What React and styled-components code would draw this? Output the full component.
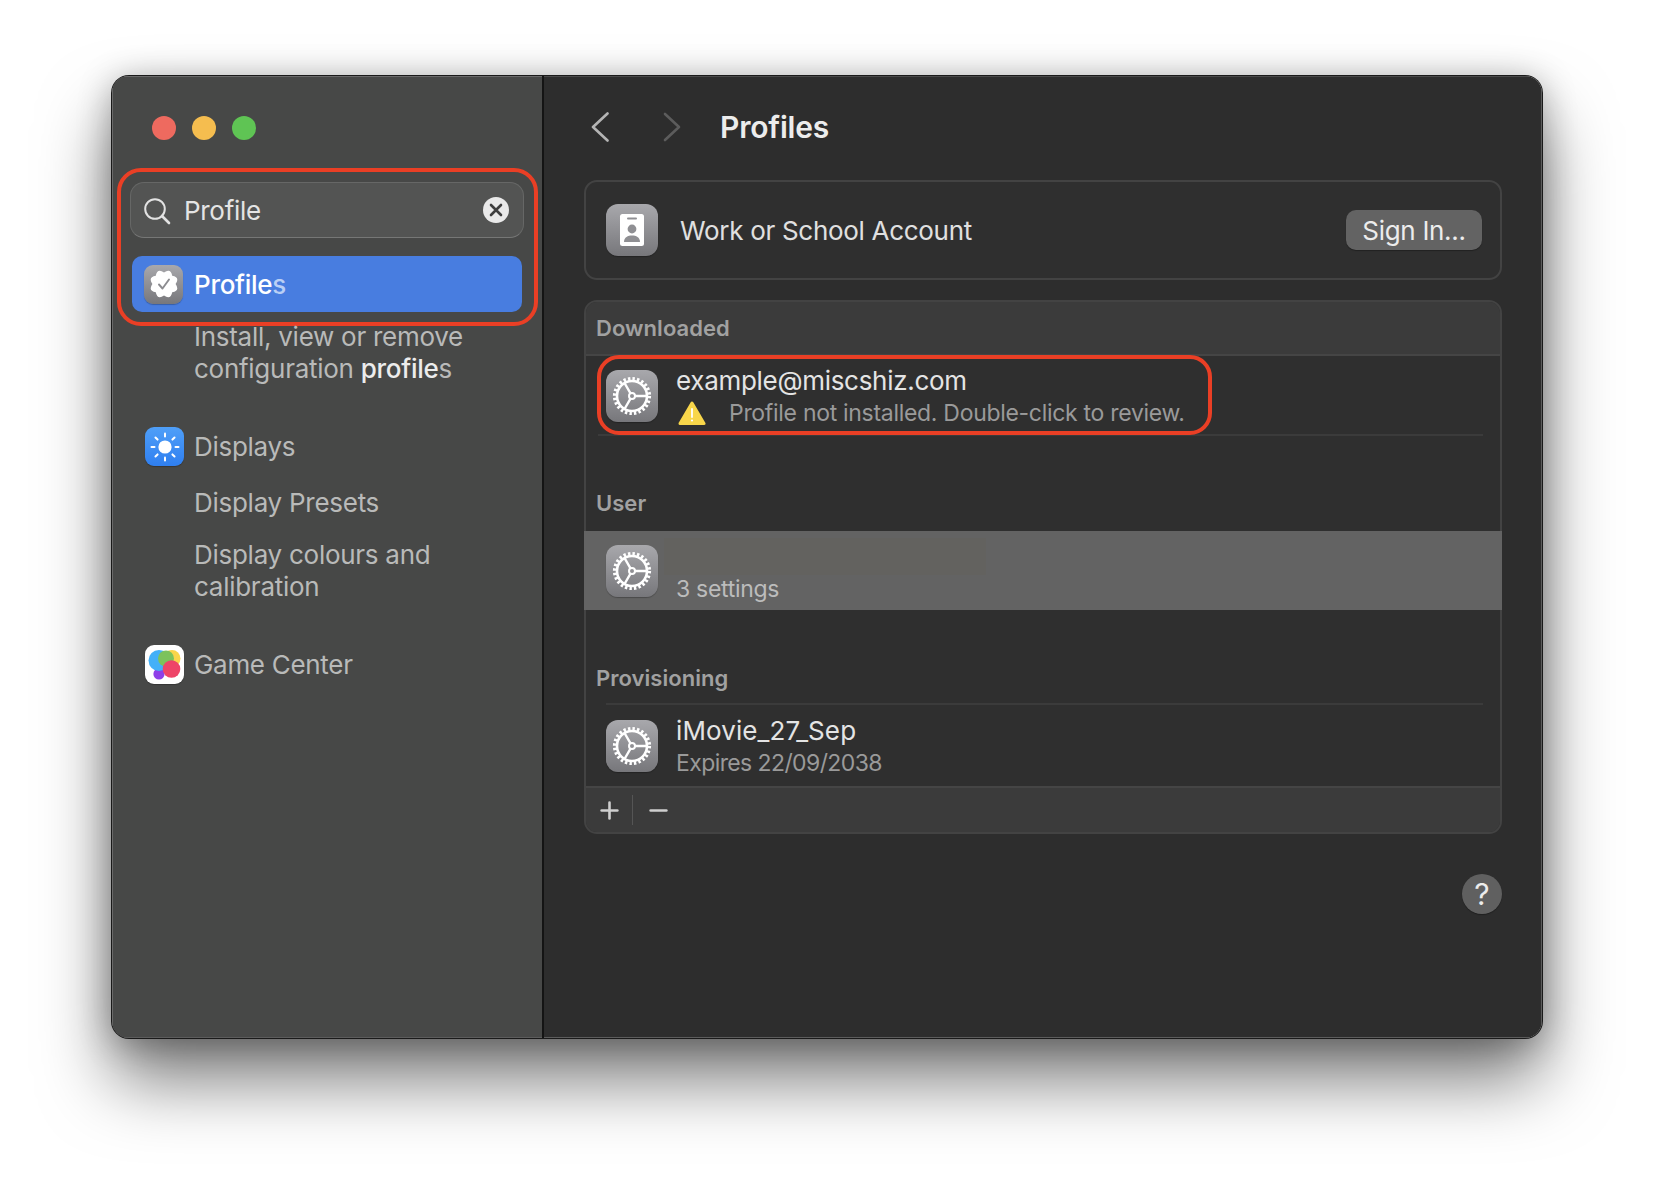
import styled, { createGlobalStyle } from "styled-components";
import { Plus, Minus } from "lucide-react";

const GlobalStyle = createGlobalStyle`
  html, body {
    margin: 0;
    background: #ffffff;
    font-family: Inter, "Liberation Sans", sans-serif;
  }
`;

const Page = styled.div`
  width: 1654px;
  height: 1186px;
  box-sizing: border-box;
  padding: 76px 112px 148px;
  overflow: hidden;
`;
const WindowFrame = styled.div`
  border-radius: 17px;
  box-shadow: 0 0 0 1px #1a1a1a, 0 42px 70px rgba(0, 0, 0, 0.52),
    0 4px 34px rgba(0, 0, 0, 0.3);
`;
const Window = styled.div`
  display: flex;
  height: 962px;
  border-radius: 17px;
  overflow: hidden;
  background: #2d2d2d;
`;

/* sidebar */
const Sidebar = styled.aside`
  width: 430px;
  flex-shrink: 0;
  background: #474847;
  border-right: 2px solid #141414;
  box-shadow: inset 1px 1px 0 #6a6a6a, inset 0 -1px 0 #5c5c5c;
`;
const TrafficLights = styled.div`
  display: flex;
  gap: 16px;
  padding: 40px 0 28px 40px;
`;
const Light = styled.span`
  width: 24px;
  height: 24px;
  border-radius: 50%;
  background: ${(p) => p.$color};
`;
const RedBox = styled.div`
  box-sizing: border-box;
  width: 421px;
  margin-left: 5px;
  padding: 10px 10px 10px 9px;
  border: 4px solid #ea3f25;
  border-radius: 24px;
`;
const Search = styled.div`
  display: flex;
  align-items: center;
  height: 56px;
  box-sizing: border-box;
  padding: 1px 14px 0 12px;
  background: #535453;
  border: 1px solid #666766;
  border-bottom-color: #767776;
  border-radius: 14px;
`;
const SearchText = styled.span`
  flex: 1;
  margin-left: 13px;
  font-size: 26px;
  color: #e4e4e4;
  letter-spacing: -0.3px;
`;
const ClearButton = styled.span`
  display: flex;
  align-items: center;
  justify-content: center;
  width: 26px;
  height: 26px;
  margin-top: -2px;
  border-radius: 50%;
  background: #e9e9e9;
`;
const SelectedRow = styled.div`
  display: flex;
  align-items: center;
  gap: 11px;
  height: 56px;
  margin: 18px 2px 0 2px;
  padding-left: 12px;
  background: #487de0;
  border-radius: 10px;
  font-size: 26px;
  font-weight: 500;
  letter-spacing: -0.3px;
  color: #ffffff;
`;
const Faded = styled.span`
  color: #b9cff5;
`;
const AppIcon = styled.span`
  display: flex;
  align-items: center;
  justify-content: center;
  flex-shrink: 0;
  width: ${(p) => p.$size || 39}px;
  height: ${(p) => p.$size || 39}px;
  border-radius: ${(p) => (p.$size ? 12 : 9)}px;
  background: ${(p) => p.$bg || "linear-gradient(#a8a8ac, #77777b)"};
  box-shadow: 0 1px 1px rgba(0, 0, 0, 0.25);
`;
const SidebarRow = styled.div`
  display: flex;
  align-items: center;
  gap: 10px;
  margin-top: ${(p) => p.$top}px;
  padding-left: 33px;
  font-size: 26px;
  letter-spacing: -0.3px;
  color: #b9bab9;
`;
const SubResult = styled.div`
  margin-top: ${(p) => p.$top || 0}px;
  padding-left: 82px;
  width: 300px;
  font-size: 26px;
  line-height: 32px;
  letter-spacing: -0.27px;
  color: #b9bab9;
`;
const Match = styled.span`
  color: #ececec;
  font-weight: 500;
`;

/* main pane */
const Main = styled.main`
  flex: 1;
  min-width: 0;
  padding: 28px 40px 0 40px;
  box-shadow: inset -1px -1px 0 #5c5c5c, inset 0 1px 0 #4a4a4a;
`;
const TitleBar = styled.header`
  display: flex;
  align-items: center;
  height: 46px;
  margin-bottom: 30px;
`;
const NavButton = styled.span`
  display: flex;
  box-sizing: border-box;
  width: ${(p) => p.$width}px;
  padding-left: 7px;
`;
const Title = styled.h1`
  margin: 0;
  font-size: 30px;
  font-weight: 600;
  letter-spacing: -0.2px;
  color: #ececec;
`;
const Card = styled.section`
  box-sizing: border-box;
  display: flex;
  align-items: center;
  height: 100px;
  padding: 0 18px 0 20px;
  border: 2px solid #434343;
  border-radius: 13px;
  background: #2f2f2f;
`;
const AccountLabel = styled.span`
  flex: 1;
  margin-left: 22px;
  font-size: 26px;
  letter-spacing: -0.3px;
  color: #e0e0e0;
`;
const SignIn = styled.button`
  width: 136px;
  height: 40px;
  padding: 0;
  border: 0;
  border-radius: 10px;
  background: #636363;
  font: inherit;
  font-size: 26px;
  letter-spacing: -0.3px;
  color: #ececec;
  box-shadow: 0 1px 1px rgba(0, 0, 0, 0.3);
`;
const ListCard = styled.section`
  box-sizing: border-box;
  height: 534px;
  margin-top: 20px;
  display: flex;
  flex-direction: column;
  border: 2px solid #434343;
  border-radius: 13px;
  background: #2f2f2f;
`;
const SectionLabel = styled.div`
  box-sizing: border-box;
  display: flex;
  align-items: flex-end;
  height: ${(p) => p.$height}px;
  padding: 0 0 ${(p) => p.$bottom}px 10px;
  font-size: 22px;
  line-height: 28px;
  font-weight: 600;
  letter-spacing: 0.05px;
  color: #a1a1a1;
  background: ${(p) => (p.$bar ? "#3b3b3b" : "none")};
  border-bottom: ${(p) => (p.$bar ? "2px solid #454545" : "0")};
  border-radius: ${(p) => (p.$bar ? "11px 11px 0 0" : "0")};
`;
const Row = styled.div`
  position: relative;
  box-sizing: border-box;
  flex-shrink: 0;
  display: flex;
  align-items: center;
  gap: 18px;
  height: ${(p) => p.$height}px;
  margin: 0 ${(p) => (p.$selected ? -2 : 0)}px;
  padding: ${(p) => p.$top || 0}px 0 0 ${(p) => (p.$selected ? 22 : 20)}px;
  background: ${(p) => (p.$selected ? "#636363" : "none")};
`;
const Rule = styled.div`
  height: 2px;
  margin: 0 17px 0 ${(p) => p.$left}px;
  background: #3b3b3b;
`;
const RowText = styled.div`
  display: flex;
  flex-direction: column;
  padding-top: ${(p) => p.$top || 0}px;
`;
const RowTitle = styled.div`
  height: 32px;
  font-size: 26px;
  line-height: 32px;
  letter-spacing: ${(p) => p.$spacing ?? -0.3}px;
  color: #e4e4e4;
`;
const RowSub = styled.div`
  display: flex;
  align-items: center;
  height: 32px;
  font-size: 23px;
  line-height: 32px;
  letter-spacing: ${(p) => p.$spacing ?? -0.3}px;
  color: ${(p) => p.$color || "#9a9a9a"};
`;
const WarningSlot = styled.span`
  display: flex;
  width: 53px;
  padding-left: 2px;
  box-sizing: border-box;
`;
const RedactedName = styled.div`
  width: 322px;
  height: 37px;
  margin: 0 0 -2px -12px;
  background: #63625f;
`;
const RedRing = styled.div`
  position: absolute;
  left: 11px;
  top: -1px;
  width: 615px;
  height: 80px;
  box-sizing: border-box;
  border: 4px solid #ea3f25;
  border-radius: 22px;
  pointer-events: none;
`;
const Footer = styled.footer`
  flex: 1;
  display: flex;
  align-items: center;
  background: #3b3b3b;
  border-top: 2px solid #454545;
  border-radius: 0 0 11px 11px;
  color: #cfcfcf;
`;
const FooterButton = styled.span`
  display: flex;
  align-items: center;
  justify-content: center;
  width: ${(p) => p.$width}px;
`;
const FooterDivider = styled.span`
  width: 1px;
  height: 30px;
  background: #555555;
`;
const HelpRow = styled.div`
  display: flex;
  justify-content: flex-end;
  margin-top: 40px;
`;
const HelpButton = styled.span`
  display: flex;
  align-items: center;
  justify-content: center;
  width: 40px;
  height: 40px;
  border-radius: 50%;
  background: #606060;
  font-size: 30px;
  font-weight: 400;
  color: #ececec;
  box-shadow: 0 1px 1px rgba(0, 0, 0, 0.3);
`;

/* drawings */
const Chevron = ({ back }) => (
  <svg width="18" height="30" viewBox="0 0 18 30" fill="none">
    <path
      d={back ? "M16.5 1.5 L2 15 L16.5 28.5" : "M2 2 L16 15 L2 28"}
      stroke={back ? "#b4b4b4" : "#5c5c5c"}
      strokeWidth="2.6"
      strokeLinecap="round"
      strokeLinejoin="round"
    />
  </svg>
);

const SearchIcon = () => (
  <svg width="28" height="28" viewBox="0 0 28 28" fill="none" stroke="#e2e2e2" strokeWidth="2">
    <circle cx="12" cy="12" r="9.8" />
    <path d="M19 19 L26 26" strokeWidth="2.6" strokeLinecap="round" />
  </svg>
);

const ClearIcon = () => (
  <svg width="14" height="14" viewBox="0 0 14 14" stroke="#3e3e3e" strokeWidth="2.6" strokeLinecap="round">
    <path d="M2 2 L12 12 M12 2 L2 12" />
  </svg>
);

const badgePath = (() => {
  const lobes = 8;
  let d = "";
  for (let i = 0; i < lobes; i++) {
    const a = (i / lobes) * Math.PI * 2 - Math.PI / 2;
    const b = ((i + 0.5) / lobes) * Math.PI * 2 - Math.PI / 2;
    const c = ((i + 1) / lobes) * Math.PI * 2 - Math.PI / 2;
    const pt = (r, t) => `${(15 + r * Math.cos(t)).toFixed(2)} ${(15 + r * Math.sin(t)).toFixed(2)}`;
    if (i === 0) d += `M${pt(11.6, a)} `;
    d += `Q${pt(17.6, b)} ${pt(11.6, c)} `;
  }
  return d + "Z";
})();

const BadgeIcon = () => (
  <svg width="30" height="30" viewBox="0 0 30 30">
    <path d={badgePath} fill="#ffffff" />
    <path
      d="M10 15.5 L13.5 19.5 L20 10.5"
      fill="none"
      stroke="#8c8c90"
      strokeWidth="1.9"
      strokeLinecap="round"
      strokeLinejoin="round"
    />
  </svg>
);

const SunIcon = () => (
  <svg width="30" height="30" viewBox="0 0 30 30" stroke="#ffffff" strokeWidth="2" strokeLinecap="round">
    <circle cx="15" cy="15" r="6.6" fill="#ffffff" stroke="none" />
    {[0, 45, 90, 135, 180, 225, 270, 315].map((deg) => (
      <line key={deg} x1="15" y1="1.5" x2="15" y2="4.5" transform={`rotate(${deg} 15 15)`} />
    ))}
  </svg>
);

const GameCenterIcon = () => (
  <svg width="34" height="34" viewBox="0 0 34 34">
    <circle cx="11" cy="26" r="5.6" fill="#8f3fe8" />
    <circle cx="11" cy="12.5" r="10.5" fill="#43b0f8" />
    <circle cx="24" cy="10.5" r="8.5" fill="#f9d54a" />
    <circle cx="18" cy="10.5" r="8" fill="#7cc25b" />
    <circle cx="23.5" cy="21" r="8.8" fill="#ee4468" />
  </svg>
);

const BadgeCardIcon = () => (
  <svg width="26" height="34" viewBox="0 0 26 34">
    <rect x="1" y="1" width="24" height="32" rx="2.5" fill="#ffffff" />
    <rect x="8" y="4.5" width="10" height="2" rx="1" fill="#8f8f93" />
    <circle cx="13" cy="16" r="4.4" fill="#8f8f93" />
    <path d="M5 29 C5 24 9 22.5 13 22.5 C17 22.5 21 24 21 29 Z" fill="#8f8f93" />
  </svg>
);

const GearIcon = () => (
  <svg width="40" height="40" viewBox="0 0 40 40" fill="none" stroke="#ffffff">
    <circle cx="20" cy="20" r="17.2" strokeWidth="3.8" strokeDasharray="2.4 2.1" />
    <circle cx="20" cy="20" r="15" strokeWidth="2.6" />
    <circle cx="20" cy="20" r="3" strokeWidth="2" />
    <path
      d="M23 20 H35 M18.5 22.6 L12.5 33 M18.5 17.4 L12.5 7"
      strokeWidth="2.4"
    />
  </svg>
);

const WarningIcon = () => (
  <svg width="28" height="25" viewBox="0 0 28 25">
    <path
      d="M14 2 L26 22.5 H2 Z"
      fill="#f8d64a"
      stroke="#f8d64a"
      strokeWidth="3"
      strokeLinejoin="round"
    />
    <path d="M14 8 V16" stroke="#ffffff" strokeWidth="1.8" strokeLinecap="round" />
    <circle cx="14" cy="19.5" r="1.1" fill="#ffffff" />
  </svg>
);

const SettingsRowIcon = () => (
  <AppIcon $size={52}>
    <GearIcon />
  </AppIcon>
);

export default function App() {
  return (
    <Page>
      <GlobalStyle />
      <WindowFrame>
        <Window>
          <Sidebar>
            <TrafficLights>
              <Light $color="#ee6a5f" />
              <Light $color="#f5bd4f" />
              <Light $color="#5fc454" />
            </TrafficLights>
            <RedBox>
              <Search>
                <SearchIcon />
                <SearchText>Profile</SearchText>
                <ClearButton>
                  <ClearIcon />
                </ClearButton>
              </Search>
              <SelectedRow>
                <AppIcon>
                  <BadgeIcon />
                </AppIcon>
                <span>
                  Profile<Faded>s</Faded>
                </span>
              </SelectedRow>
            </RedBox>
            <SubResult $top={-5}>
              Install, view or remove configuration <Match>profile</Match>s
            </SubResult>
            <SidebarRow $top={42}>
              <AppIcon $bg="linear-gradient(#4f9ff8, #2f7ff0)">
                <SunIcon />
              </AppIcon>
              Displays
            </SidebarRow>
            <SubResult $top={21}>Display Presets</SubResult>
            <SubResult $top={20}>Display colours and calibration</SubResult>
            <SidebarRow $top={42}>
              <AppIcon $bg="#ffffff">
                <GameCenterIcon />
              </AppIcon>
              Game Center
            </SidebarRow>
          </Sidebar>
          <Main>
            <TitleBar>
              <NavButton $width={72}>
                <Chevron back />
              </NavButton>
              <NavButton $width={64}>
                <Chevron />
              </NavButton>
              <Title>Profiles</Title>
            </TitleBar>
            <Card>
              <AppIcon $size={52}>
                <BadgeCardIcon />
              </AppIcon>
              <AccountLabel>Work or School Account</AccountLabel>
              <SignIn>Sign In...</SignIn>
            </Card>
            <ListCard>
              <SectionLabel $bar $height={54} $bottom={12}>
                Downloaded
              </SectionLabel>
              <Row $height={78} $top={2}>
                <SettingsRowIcon />
                <RowText $top={2}>
                  <RowTitle>example@miscshiz.com</RowTitle>
                  <RowSub>
                    <WarningSlot>
                      <WarningIcon />
                    </WarningSlot>
                    Profile not installed. Double-click to review.
                  </RowSub>
                </RowText>
                <RedRing />
              </Row>
              <Rule $left={12} />
              <SectionLabel $height={95} $bottom={14}>
                User
              </SectionLabel>
              <Row $height={79} $top={1} $selected>
                <SettingsRowIcon />
                <RowText>
                  <RedactedName />
                  <RowSub $color="#bcbcbc">3 settings</RowSub>
                </RowText>
              </Row>
              <SectionLabel $height={93} $bottom={11}>
                Provisioning
              </SectionLabel>
              <Rule $left={20} />
              <Row $height={81}>
                <SettingsRowIcon />
                <RowText $top={3}>
                  <RowTitle $spacing={0.1}>iMovie_27_Sep</RowTitle>
                  <RowSub $spacing={-0.6}>Expires 22/09/2038</RowSub>
                </RowText>
              </Row>
              <Footer>
                <FooterButton $width={46}>
                  <Plus size={27} strokeWidth={2.3} />
                </FooterButton>
                <FooterDivider />
                <FooterButton $width={50}>
                  <Minus size={27} strokeWidth={2.3} />
                </FooterButton>
              </Footer>
            </ListCard>
            <HelpRow>
              <HelpButton>?</HelpButton>
            </HelpRow>
          </Main>
        </Window>
      </WindowFrame>
    </Page>
  );
}
